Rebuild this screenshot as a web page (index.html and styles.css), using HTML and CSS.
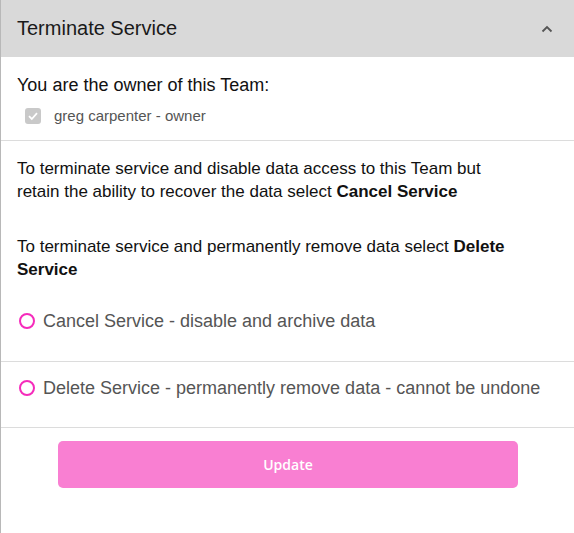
FILE: index.html
```html
<!DOCTYPE html>
<html>
<head>
<meta charset="utf-8">
<link rel="stylesheet" href="styles.css">
</head>
<body>
<div class="panel">
  <div class="header">
    <span class="title">Terminate Service</span>
    <svg class="chev" width="12" height="8" viewBox="0 0 12 8"><path d="M1.5 6.5 L6 2 L10.5 6.5" fill="none" stroke="#555" stroke-width="1.8"/></svg>
  </div>
  <div class="owner">
    <p class="lead">You are the owner of this Team:</p>
    <div class="check-row">
      <span class="checkbox"><svg width="16" height="16" viewBox="0 0 16 16"><path d="M4 8.2 L6.8 11 L12 5.2" fill="none" stroke="#fff" stroke-width="1.8"/></svg></span>
      <span class="check-label">greg carpenter - owner</span>
    </div>
  </div>
  <div class="info">
    <p>To terminate service and disable data access to this Team but retain the ability to recover the data select <b>Cancel Service</b></p>
    <p>To terminate service and permanently remove data select <b>Delete Service</b></p>
  </div>
  <div class="option first">
    <span class="radio"></span>
    <span class="opt-label">Cancel Service - disable and archive data</span>
  </div>
  <div class="option second">
    <span class="radio"></span>
    <span class="opt-label">Delete Service - permanently remove data - cannot be undone</span>
  </div>
  <div class="actions">
    <button class="update">Update</button>
  </div>
</div>
</body>
</html>
```
FILE: styles.css
```css
html, body {
  margin: 0;
  padding: 0;
  background: #fff;
}
body {
  font-family: "Liberation Sans", Arial, sans-serif;
  color: #111;
  border-left: 1px solid #b8b8b8;
  min-height: 533px;
  box-sizing: border-box;
}
.panel {
  width: 573px;
}
.header {
  height: 57px;
  background: #d9d9d9;
  display: flex;
  align-items: center;
  justify-content: space-between;
  padding: 0 21px 0 16px;
  box-sizing: border-box;
}
.title {
  font-size: 20px;
  color: #1a1a1a;
}
.chev {
  display: block;
}
.owner {
  padding: 17px 16px 16px;
  border-bottom: 1px solid #dcdcdc;
}
.lead {
  margin: 0;
  font-size: 18px;
  line-height: 22px;
}
.check-row {
  display: flex;
  align-items: center;
  margin-top: 11px;
  padding-left: 8px;
}
.checkbox {
  width: 16px;
  height: 16px;
  border-radius: 3px;
  background: #c9c9c9;
  display: inline-block;
}
.checkbox svg {
  display: block;
}
.check-label {
  margin-left: 13px;
  font-size: 15px;
  color: #555;
}
.info {
  padding: 16px 16px 0;
}
.info p {
  margin: 0 0 32px;
  font-size: 17px;
  line-height: 23px;
  max-width: 495px;
}
.info p:last-child {
  margin-bottom: 0;
}
.option {
  display: flex;
  align-items: center;
  padding: 0 18px;
  border-bottom: 1px solid #dcdcdc;
  box-sizing: border-box;
}
.option.first {
  height: 81px;
  padding-top: 0;
}
.option.second {
  height: 66px;
  padding-bottom: 13px;
}
.radio {
  width: 12px;
  height: 12px;
  border: 2px solid #f52bbb;
  border-radius: 50%;
  flex: none;
}
.opt-label {
  margin-left: 8px;
  font-size: 18px;
  color: #555;
}
.actions {
  padding: 13px 56px 0 57px;
}
.update {
  display: block;
  width: 460px;
  height: 47px;
  border: none;
  border-radius: 5px;
  background: #f97fd2;
  color: #fff;
  font-family: "Open Sans", sans-serif;
  font-weight: 600;
  font-size: 14px;
}
```
